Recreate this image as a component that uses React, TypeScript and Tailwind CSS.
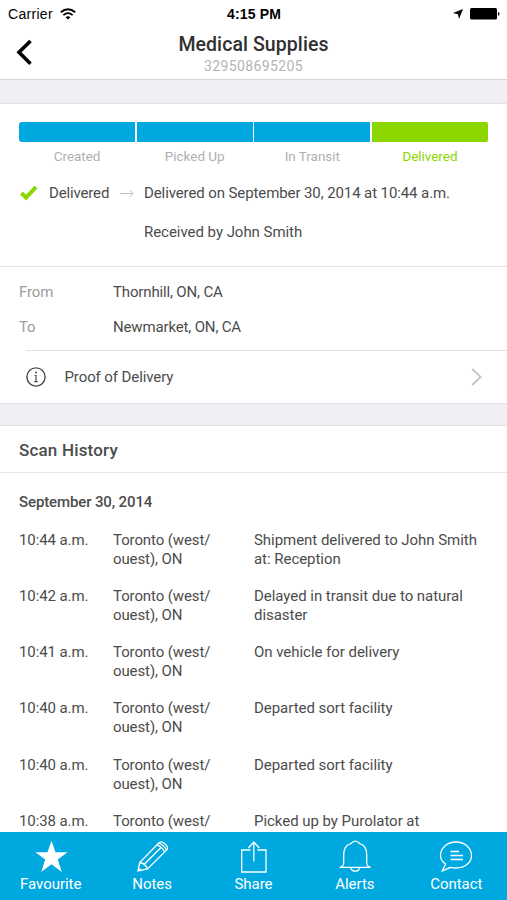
import React from "react";

const steps = [
  { label: "Created", bar: "bg-[#00a8e0] rounded-l-[3px]", text: "text-[#b0b0b0]" },
  { label: "Picked Up", bar: "bg-[#00a8e0]", text: "text-[#b0b0b0]" },
  { label: "In Transit", bar: "bg-[#00a8e0]", text: "text-[#b0b0b0]" },
  { label: "Delivered", bar: "bg-[#8cd600] rounded-r-[2px]", text: "text-[#8cd600]" },
];

const scans = [
  { time: "10:44 a.m.", place: ["Toronto (west/", "ouest), ON"], lines: ["Shipment delivered to John Smith", "at: Reception"] },
  { time: "10:42 a.m.", place: ["Toronto (west/", "ouest), ON"], lines: ["Delayed in transit due to natural", "disaster"] },
  { time: "10:41 a.m.", place: ["Toronto (west/", "ouest), ON"], lines: ["On vehicle for delivery"] },
  { time: "10:40 a.m.", place: ["Toronto (west/", "ouest), ON"], lines: ["Departed sort facility"] },
  { time: "10:40 a.m.", place: ["Toronto (west/", "ouest), ON"], lines: ["Departed sort facility"] },
  { time: "10:38 a.m.", place: ["Toronto (west/"], lines: ["Picked up by Purolator at"] },
];

const tabs = [
  {
    label: "Favourite",
    icon: <path d="M17.500 .7l4 11.500h12l-9.700 7.300 4 12.500-10.300-7.700L7.200 32l4-12.500L1.500 12.200h12z" fill="currentColor" stroke="none" />,
  },
  {
    label: "Notes",
    icon: (
      <>
        <path d="M3 31l1.700-8.500L24 2.800q1.800-1.600 3.800-.5 3 1.700 4.600 4.700.7 1.600-.6 2.900L12.500 29z" />
        <path d="M4.700 22.500q6 1 7.800 6.500M8.500 25L26 7.500M22 4.800q5.500 2 7.500 7.300M23.800 3q5.600 2 7.600 7.300M3.600 28.300l3 2.400" />
      </>
    ),
  },
  {
    label: "Share",
    icon: <path d="M14.500 10H5.700v22h24.300V10h-8.500M17.800 21.500V2M12.300 8l5.500-6 5.500 6" />,
  },
  {
    label: "Alerts",
    icon: (
      <>
        <path d="M1.700 27.300c3.500-.5 4-2 4-5V14C5.700 8.500 9 4.700 13 3.500q2-2.300 4.300-2.300t4.300 2.300C25.500 4.700 28.700 8.500 28.700 14v8.300c0 3 .5 4.500 4 5z" />
        <path d="M12.700 27.500q1 3.700 4.500 3.700t4.500-3.700" />
      </>
    ),
  },
  {
    label: "Contact",
    icon: (
      <>
        <path d="M3.300 31l3.300-7C3.300 21.800 1.500 19 1.500 15.500 1.500 8 8.300 2 17 2s15.500 6 15.500 13.500S25.700 28 17 28q-3 0-5.500-.7z" />
        <path d="M11.500 11.500H20M11.500 15.500H24M11.500 19.500H24" />
      </>
    ),
  },
];

const StatusBar = () => {
  return (
    <div className="flex h-[28px] shrink-0 items-center justify-between pl-[8px] pr-[7px] font-['Liberation_Sans',sans-serif] text-[14px] text-black">
      <div className="flex w-[160px] items-center gap-[7px]">
        <span className="tracking-[0.300px]">Carrier</span>
        <svg width="16" height="12" viewBox="0 0 16 12" fill="none" stroke="black" strokeWidth="1.800">
          <path d="M.8 4.300q7.200-6.200 14.400 0M3.400 7.100q4.600-3.900 9.200 0" />
          <path d="M8 11.500L5.600 9.200q2.400-1.900 4.800 0z" fill="black" stroke="none" />
        </svg>
      </div>
      <span className="font-bold tracking-[0.150px]">4:15 PM</span>
      <div className="flex w-[160px] items-center justify-end gap-[7px]">
        <svg width="10" height="10" viewBox="0 0 10 10">
          <path d="M10 0L6 10 5 5.200 0 4z" />
        </svg>
        <svg width="30" height="12" viewBox="0 0 30 12">
          <rect width="27" height="11.500" rx="1.500" />
          <path d="M28 4q1.500.3 1.500 1.900T28 7.800z" />
        </svg>
      </div>
    </div>
  );
};

const Header = () => {
  return (
    <div className="flex h-[52px] shrink-0 border-b border-[#d6d6da] px-[16px]">
      <svg className="mt-[11px] shrink-0" width="18" height="28" viewBox="0 0 18 28" fill="none" stroke="black" strokeWidth="3.600">
        <path d="M14.500 2L3 13.300l11.500 11.400" />
      </svg>
      <div className="flex grow flex-col items-center pr-[18px]">
        <h1 className="mt-[5px] text-[19.500px] font-medium leading-[24px] tracking-[0.080px] text-[#303030]">Medical Supplies</h1>
        <p className="-mt-px text-[14px] leading-[20px] tracking-[0.400px] text-[#b4b4b4]">329508695205</p>
      </div>
    </div>
  );
};

const App = () => {
  return (
    <div className="flex h-[900px] w-[507px] flex-col overflow-hidden bg-white font-[Roboto,sans-serif] text-[15px] tracking-[-0.040px] text-[#4c4c4c]">
      <StatusBar />
      <Header />
      <div className="h-[24px] shrink-0 border-b border-[#e2e2e6] bg-[#efeff4]" />

      <section className="h-[163px] shrink-0 border-b border-[#e2e2e2] px-[19px] pt-[18px]">
        <div className="grid grid-cols-4 gap-x-[1.500px]">
          {steps.map((step) => (
            <div key={step.label}>
              <div className={`h-[19.500px] ${step.bar}`} />
              <p className={`mt-[4px] text-center text-[13.500px] leading-[20px] ${step.text}`}>{step.label}</p>
            </div>
          ))}
        </div>
        <div className="mt-[18px] flex h-[20px] items-center">
          <svg width="20" height="18" viewBox="0 0 20 18" fill="none" stroke="#8cd600" strokeWidth="4">
            <path d="M2.500 8l4.600 4.600L17 2" />
          </svg>
          <span className="ml-[10px] w-[71px] tracking-[-0.150px]">Delivered</span>
          <svg width="14" height="10" viewBox="0 0 14 10" fill="none" stroke="#c2c2c2" strokeWidth="1">
            <path d="M0 4.500h13M9.500 1L13 4.500 9.500 8" />
          </svg>
          <span className="ml-[10px] whitespace-nowrap tracking-[-0.100px]">Delivered on September 30, 2014 at 10:44 a.m.</span>
        </div>
        <p className="ml-[125px] mt-[18px] leading-[20px]">Received by John Smith</p>
      </section>

      <section className="shrink-0">
        <div className="grid h-[83px] grid-cols-[94px_1fr] content-start gap-y-[15px] pl-[19px] pt-[14.500px] leading-[20px] tracking-[-0.150px]">
          <span className="text-[#9c9c9c]">From</span>
          <span>Thornhill, ON, CA</span>
          <span className="text-[#9c9c9c]">To</span>
          <span>Newmarket, ON, CA</span>
        </div>
        <div className="ml-[26px] flex h-[53px] items-center border-t border-[#e2e2e2] pr-[25px]">
          <svg width="20" height="20" viewBox="0 0 20 20" fill="none" stroke="#4c4c4c" strokeWidth="1.400">
            <circle cx="10" cy="10" r="9.100" />
            <path d="M8.500 8.500H10v6M8.200 14.700h3.600" strokeWidth="1.200" />
            <circle cx="10" cy="5.500" r="1" fill="#4c4c4c" stroke="none" />
          </svg>
          <span className="ml-[18.500px] pt-px tracking-[-0.100px]">Proof of Delivery</span>
          <svg className="ml-auto" width="11" height="18" viewBox="0 0 11 18" fill="none" stroke="#c2c2c4" strokeWidth="1.800">
            <path d="M1.200 1L9.700 9l-8.500 8" />
          </svg>
        </div>
      </section>

      <div className="h-[23px] shrink-0 border-y border-[#e2e2e6] bg-[#efeff4]" />

      <section className="flex min-h-0 grow flex-col overflow-hidden">
        <h2 className="h-[47px] shrink-0 border-b border-[#e6e6e6] pl-[19px] text-[17px] font-medium leading-[48px] tracking-[0.180px]">Scan History</h2>
        <h3 className="mb-[18.500px] mt-[19px] shrink-0 pl-[19px] font-medium leading-[20px] tracking-[-0.120px]">September 30, 2014</h3>
        {scans.map((scan, idx) => (
          <div key={idx} className="mb-[18.250px] grid shrink-0 grid-cols-[94px_141px_1fr] pl-[19px] leading-[19px]">
            <span className="tracking-[-0.100px]">{scan.time}</span>
            <span className="tracking-[-0.100px]">
              {scan.place.map((line) => (
                <span key={line} className="block">
                  {line}
                </span>
              ))}
            </span>
            <span>
              {scan.lines.map((line) => (
                <span key={line} className="block whitespace-nowrap">
                  {line}
                </span>
              ))}
            </span>
          </div>
        ))}
      </section>

      <nav className="grid h-[68px] shrink-0 grid-cols-5 bg-[#00a8e0] text-white">
        {tabs.map((tab) => (
          <button key={tab.label} className="flex flex-col items-center pt-[8px]">
            <svg width="34" height="34" viewBox="0 0 34 34" fill="none" stroke="currentColor" strokeWidth="1.300">
              {tab.icon}
            </svg>
            <span className="text-[15px] leading-[20px]">{tab.label}</span>
          </button>
        ))}
      </nav>
    </div>
  );
};

export default App;
